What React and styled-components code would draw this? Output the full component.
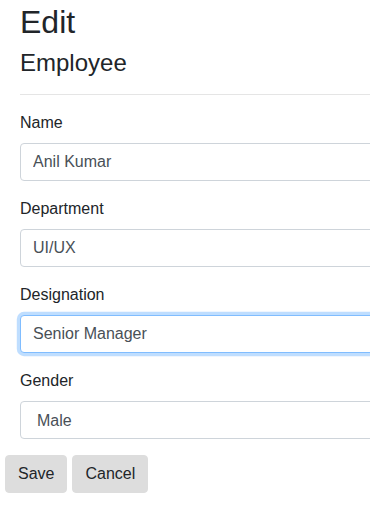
import React, { useEffect, useRef } from 'react'
import styled, { createGlobalStyle, css } from 'styled-components';

const GlobalStyle = createGlobalStyle`
  html, body {
    margin: 0;
    padding: 0;
    overflow: hidden;
    background: #fff;
  }
  body {
    font-family: "Liberation Sans", Arial, sans-serif;
    font-size: 16px;
    line-height: 1.5;
    color: #212529;
  }
  *, *::before, *::after {
    box-sizing: border-box;
  }
`

const fields = [
  { label: 'Name', value: 'Anil Kumar' },
  { label: 'Department', value: 'UI/UX' },
  { label: 'Designation', value: 'Senior Manager', focused: true },
];

const EditEmployee = () => {
  const focusRef = useRef(null);

  useEffect(() => {
    const el = focusRef.current;
    if (el) {
      el.focus({ preventScroll: true });
      el.setSelectionRange(el.value.length, el.value.length);
      window.scrollTo(0, 0);
    }
  }, []);

  return (
    <Page>
      <GlobalStyle />
      <FormArea>
        <Title>Edit</Title>
        <SubTitle>Employee</SubTitle>
        <Rule />
        {fields.map((f) => (
          <Group key={f.label}>
            <Label>{f.label}</Label>
            <Input
              type='text'
              defaultValue={f.value}
              $focused={f.focused}
              ref={f.focused ? focusRef : undefined}
            />
          </Group>
        ))}
        <Group>
          <Label>Gender</Label>
          <Select defaultValue='Male'>
            <option>Male</option>
            <option>Female</option>
          </Select>
        </Group>
      </FormArea>
      <Buttons>
        <Button type='button'>Save</Button>
        <Button type='button'>Cancel</Button>
      </Buttons>
    </Page>
  );
}

export default EditEmployee;

const Page = styled.div`
  width: 600px;
  padding: 3px 5px 0;
`

const FormArea = styled.div`
  padding-left: 15px;
`

const Title = styled.h1`
  margin: 0 0 8px;
  font-size: 32px;
  font-weight: 400;
  line-height: 1.2;
`

const SubTitle = styled.h2`
  margin: 0;
  font-size: 24px;
  font-weight: 400;
  line-height: 1.2;
`

const Rule = styled.hr`
  margin: 16px 0;
  border: 0;
  border-top: 1px solid rgba(0, 0, 0, 0.1);
`

const Group = styled.div`
  margin-bottom: 16px;
`

const Label = styled.label`
  display: inline-block;
  margin-bottom: 8px;
`

const control = css`
  display: block;
  width: 100%;
  height: 38px;
  padding: 6px 12px;
  font-family: inherit;
  font-size: 16px;
  line-height: 1.5;
  color: #495057;
  background: #fff;
  border: 1px solid #ced4da;
  border-radius: 4px;
  outline: none;
`

const Input = styled.input`
  ${control}
  ${(p) => p.$focused && css`
    border-color: #80bdff;
    box-shadow: 0 0 0 3.2px rgba(0, 123, 255, 0.25);
  `}
`

const Select = styled.select`
  ${control}
`

const Buttons = styled.div`
  display: flex;
  gap: 5px;
`

const Button = styled.button`
  height: 38px;
  padding: 6px 12px;
  font-family: inherit;
  font-size: 16px;
  line-height: 1.5;
  color: #212529;
  background: #dddddd;
  border: 1px solid #dddddd;
  border-radius: 4px;
`
